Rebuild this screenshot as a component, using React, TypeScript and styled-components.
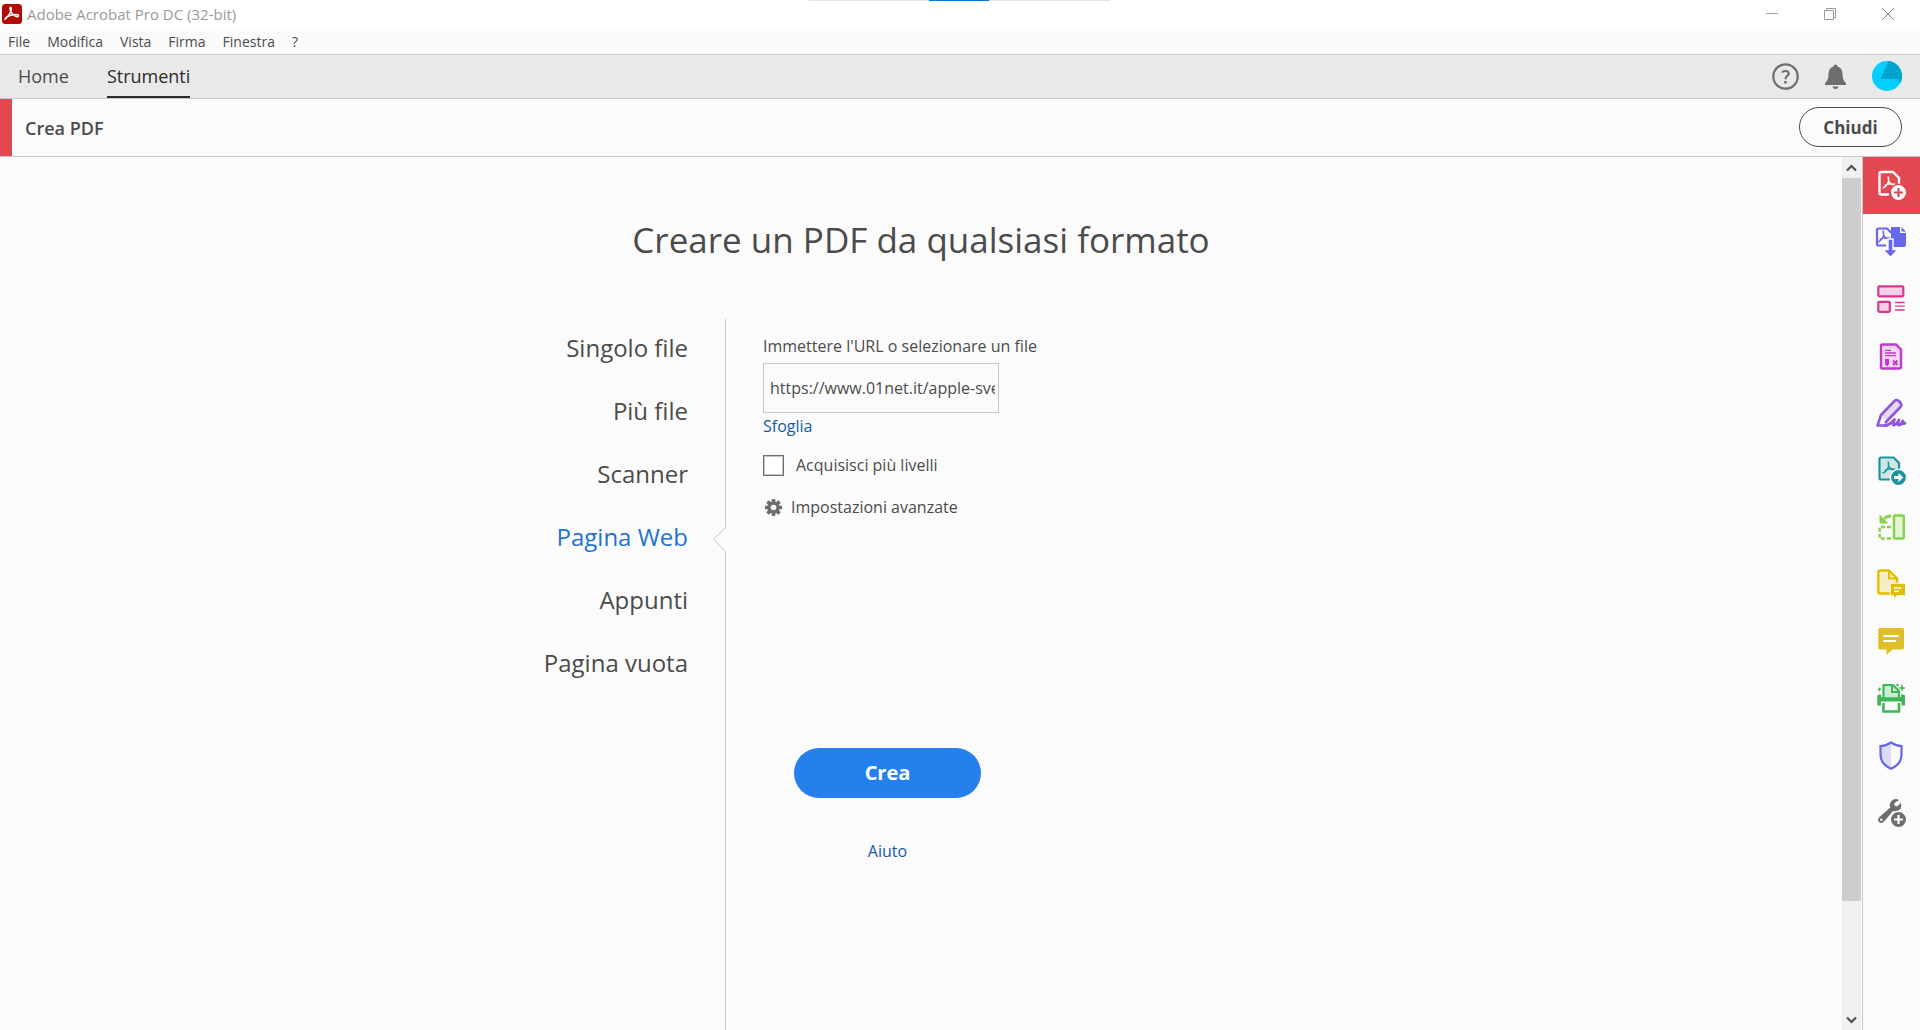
import React, { useState } from 'react';
import styled, { createGlobalStyle } from 'styled-components';

const GlobalStyle = createGlobalStyle`
  *, *::before, *::after { box-sizing: border-box; }
  body {
    margin: 0;
    background: #fbfbfb;
    color: #4b4b4b;
    font-family: "Open Sans", "Noto Sans", sans-serif;
    font-size: 16px;
  }
  button, input { font: inherit; color: inherit; }
  button { padding: 0; border: 0; background: none; cursor: pointer; }
  svg { display: block; }
`;

const Window = styled.div`
  display: flex;
  flex-direction: column;
  height: 100vh;
  overflow: hidden;
`;

const TitleBar = styled.header`
  position: relative;
  display: flex;
  align-items: center;
  height: 29px;
  flex: none;
  padding: 0 0 2px 2px;
  gap: 5px;
  background: #fff;
  color: #999;
  font-size: 15px;
`;

const AppTitle = styled.span`
  flex: 1;
`;

const LoadTrack = styled.div`
  position: absolute;
  top: 0;
  left: 50%;
  width: 301px;
  height: 1px;
  margin-left: -151px;
  background: linear-gradient(to right, #e5e5e5 120px, #0078d7 120px 180px, #e5e5e5 180px);
`;

const WindowButton = styled.button`
  display: grid;
  place-items: center;
  width: 58px;
  height: 27px;
  &:last-child { margin-right: 3px; }
`;

const WindowButtons = styled.div`
  display: flex;
`;

const MenuBar = styled.nav`
  display: flex;
  gap: 17px;
  height: 26px;
  flex: none;
  padding: 0 8px;
  background: #fafafa;
  border-bottom: 1px solid #c8c8c8;
`;

const MenuButton = styled.button`
  font-size: 14px;
  line-height: 24px;
`;

const TabBar = styled.div`
  display: flex;
  align-items: stretch;
  gap: 38px;
  height: 44px;
  flex: none;
  padding: 0 18px;
  background: #e9e9e9;
  border-bottom: 1px solid #c8c8c8;
`;

const Tab = styled.button<{ $active?: boolean }>`
  border-bottom: 2px solid ${p => (p.$active ? '#2c2c2c' : 'transparent')};
  color: ${p => (p.$active ? '#2c2c2c' : '#4b4b4b')};
  font-size: 18px;
  line-height: 38px;
`;

const Account = styled.div`
  display: flex;
  align-items: center;
  gap: 23px;
  margin-left: auto;
  padding-bottom: 1px;
`;

const ToolBar = styled.div`
  display: flex;
  align-items: center;
  justify-content: space-between;
  height: 58px;
  flex: none;
  padding: 0 18px 1px 25px;
  background: linear-gradient(to right, #e34850 12px, transparent 12px);
  border-bottom: 1px solid #c8c8c8;
`;

const ToolTitle = styled.h2`
  margin: 0;
  padding-top: 2px;
  font-size: 18px;
  font-weight: 600;
`;

const CloseButton = styled.button`
  width: 103px;
  height: 40px;
  border: 1px solid #4b4b4b;
  border-radius: 20px;
  font-size: 17px;
  font-weight: 700;
`;

const Body = styled.div`
  display: flex;
  flex: 1;
  min-height: 0;
`;

const Workspace = styled.main`
  display: flex;
  flex-direction: column;
  align-items: center;
  flex: 1;
  padding-top: 59px;
`;

const Heading = styled.h1`
  margin: 0 0 55px;
  font-size: 35px;
  font-weight: 400;
  line-height: 48px;
`;

const Columns = styled.div`
  display: grid;
  grid-template-columns: 224px 1fr;
  width: 840px;
  max-width: 100%;
  flex: 1;
`;

const SourceList = styled.nav`
  display: flex;
  flex-direction: column;
  align-items: flex-end;
  gap: 33px;
  padding: 14px 37px 0 0;
`;

const Source = styled.button<{ $active?: boolean }>`
  position: relative;
  color: ${p => (p.$active ? '#1f72cf' : '#4b4b4b')};
  font-size: 24px;
  line-height: 30px;
  white-space: nowrap;
`;

const Notch = styled.svg`
  position: absolute;
  top: 5px;
  right: -38px;
`;

const Panel = styled.form`
  display: flex;
  flex-direction: column;
  align-items: flex-start;
  padding: 15px 0 0 37px;
  border-left: 1px solid #c8c8c8;
  line-height: 24px;
`;

const UrlInput = styled.input`
  width: 236px;
  height: 50px;
  margin: 5px 0 1px;
  padding: 0 3px 0 6px;
  border: 1px solid #c8c8c8;
  border-radius: 0;
  background: #fbfbfb;
  outline: none;
`;

const Link = styled.a`
  color: #1459a8;
  text-decoration: none;
`;

const CheckRow = styled.label`
  display: flex;
  align-items: center;
  gap: 12px;
  margin-top: 15px;
`;

const CheckBox = styled.input`
  appearance: none;
  width: 21px;
  height: 21px;
  margin: 0;
  border: 1px solid #6e6e6e;
  box-shadow: inset 0 0 0 1px #c4c4c4;
  background: #fff;
  &:checked { background: #6e6e6e; }
`;

const AdvancedButton = styled.button`
  display: flex;
  align-items: center;
  gap: 8px;
  margin: 18px 0 0 1px;
`;

const Actions = styled.div`
  display: flex;
  flex-direction: column;
  align-items: center;
  gap: 41px;
  width: 249px;
  margin-top: 229px;
`;

const CreateButton = styled.button`
  width: 187px;
  height: 50px;
  border-radius: 25px;
  background: #2680eb;
  color: #fff;
  font-size: 20px;
  font-weight: 700;
`;

const ScrollBar = styled.div`
  display: flex;
  flex-direction: column;
  align-items: center;
  justify-content: space-between;
  width: 20px;
  flex: none;
  background: #f0f0f0;
  border-right: 1px solid #fbfbfb;
`;

const ScrollButton = styled.button`
  display: grid;
  place-items: center;
  width: 100%;
  height: 21px;
`;

const ScrollTrack = styled.div`
  flex: 1;
  width: 100%;
`;

const ScrollThumb = styled.div`
  height: 87%;
  background: #cdcdcd;
`;

const Rail = styled.aside`
  display: flex;
  flex-direction: column;
  flex: none;
  border-left: 1px solid #c8c8c8;
`;

const RailButton = styled.button<{ $active?: boolean }>`
  width: 57px;
  height: 57px;
  background: ${p => (p.$active ? '#e34850' : 'transparent')};
`;

const PdfMark = ({ color, x, y }: { color: string; x: number; y: number }) => (
  <path
    transform={`translate(${x} ${y})`}
    d="M-.8 -6Q.3 -2 -1.500 .8Q-3.200 3.800 -6 5M-.3 -2Q1.500 1.600 5 2.600M-3.800 2.200Q1 .2 6 1.200"
    fill="none"
    stroke={color}
    strokeWidth="1.4"
    strokeLinecap="round"
  />
);

const Glyph = ({ children }: { children: React.ReactNode }) => (
  <svg width="57" height="57" viewBox="0 0 57 57" fill="none" aria-hidden="true">
    {children}
  </svg>
);

const railTools = [
  {
    name: 'Crea PDF',
    icon: (
      <Glyph>
        <path d="M26 37.500H18.500A2 2 0 0 1 16.500 35.500V17A2 2 0 0 1 18.500 15H30L36 21V27" stroke="#fff" strokeWidth="2.400" />
        <PdfMark color="#fff" x={26} y={26} />
        <circle cx="35.500" cy="35.500" r="8.200" fill="#fff" stroke="#e34850" strokeWidth="1.400" />
        <path d="M35.500 31V40M31 35.500H40" stroke="#e34850" strokeWidth="2.200" />
      </Glyph>
    ),
  },
  {
    name: 'Combina file',
    icon: (
      <Glyph>
        <path d="M28 13H37V19H43V31Q43 33 41 33H28Z" fill="#6767ec" />
        <path d="M38.500 13L43 17.500H38.500Z" fill="#6767ec" />
        <path d="M23 31.500H15.500Q14 31.500 14 30V16Q14 14.500 15.500 14.500H24L28.500 19" stroke="#6767ec" strokeWidth="2.200" />
        <PdfMark color="#6767ec" x={21} y={23} />
        <path d="M25 25H30V35.500H35L27.500 43.500L20 35.500H25Z" fill="#6767ec" stroke="#fbfbfb" strokeWidth="1.400" />
      </Glyph>
    ),
  },
  {
    name: 'Organizza pagine',
    icon: (
      <Glyph>
        <g fill="#f7cfe4" stroke="#d83790" strokeWidth="2.200">
          <rect x="15.300" y="15.300" width="25" height="10" rx="1" />
          <rect x="15.300" y="30.800" width="11.500" height="10" rx="1" />
        </g>
        <path d="M32 31.500H41.700M32 35.200H41.700M32 39H41.700" stroke="#d83790" strokeWidth="1.300" />
      </Glyph>
    ),
  },
  {
    name: 'Prepara modulo',
    icon: (
      <Glyph>
        <path d="M18 18Q18 16.500 19.500 16.500H33L38 21.500V39Q38 40.500 36.500 40.500H19.500Q18 40.500 18 39Z" fill="#f3d6f3" stroke="#c038cc" strokeWidth="2.400" />
        <path d="M22 22.300H28M22 25H33M22 27.700H33" stroke="#c038cc" strokeWidth="1.300" />
        <path d="M22 31H26V36L24 38.500L22 36Z" fill="#c038cc" />
        <path d="M30 32.500L34.500 37M34.500 32.500L30 37" stroke="#c038cc" strokeWidth="2" />
      </Glyph>
    ),
  },
  {
    name: 'Modifica PDF',
    icon: (
      <Glyph>
        <path d="M14.500 40.500L18 30L31.500 16Q33.500 14 36.500 16.500Q39.500 19.500 37.500 22L24 36L20 40.500Z" fill="#e5daf5" />
        <path d="M18 30L27 40L14.500 40.500Z" fill="#fbfbfb" />
        <path d="M24 40.500H14.500L18 30L31.500 16Q33.500 14 36.500 16.500Q39.500 19.500 37.500 22L22 38" stroke="#9256d9" strokeWidth="2.600" strokeLinejoin="round" />
        <path d="M22 40.500Q27 40 31.500 34.500Q29 40 31 40Q33 40 36 35Q34 40 36 40Q38 40 40 36Q38.500 40.500 42 38" stroke="#9256d9" strokeWidth="2.800" strokeLinecap="round" strokeLinejoin="round" />
      </Glyph>
    ),
  },
  {
    name: 'Esporta PDF',
    icon: (
      <Glyph>
        <path d="M18 37.500Q16.500 37.500 16.500 36V17Q16.500 15.500 18 15.500H30.500L36 21V37.500Z" fill="#cfe6e7" stroke="#1b959a" strokeWidth="2.200" />
        <PdfMark color="#1b959a" x={26} y={26} />
        <circle cx="35.500" cy="35.500" r="8.200" fill="#1b959a" stroke="#fbfbfb" strokeWidth="1.600" />
        <path d="M31 34H35.500V31L40.300 35.500L35.500 40V37H31Z" fill="#fff" />
      </Glyph>
    ),
  },
  {
    name: 'Ruota pagine',
    icon: (
      <Glyph>
        <rect x="31" y="16.500" width="9.800" height="23" rx="1" fill="#e4f4d6" stroke="#87d24a" strokeWidth="2.400" />
        <path d="M28 28H16.700V39.500H28" stroke="#87d24a" strokeWidth="2.400" strokeDasharray="4 2" />
        <path d="M28 17Q23 17 21.500 20" stroke="#87d24a" strokeWidth="2.800" />
        <path d="M16.500 15.500V24.500H25.500Z" fill="#87d24a" />
      </Glyph>
    ),
  },
  {
    name: 'Invia per commenti',
    icon: (
      <Glyph>
        <path d="M17 37.500Q15.300 37.500 15.300 36V16Q15.300 14.500 17 14.500H26L34 22.500V37.500Z" fill="#f4edc7" stroke="#dfbf03" strokeWidth="2.400" />
        <path d="M26 14.500V22.500H34" stroke="#dfbf03" strokeWidth="2.200" />
        <path d="M28.500 27.200H41.500Q42.500 27.200 42.500 28.500V38.500Q42.500 39.700 41.500 39.700H34L30.500 43V39.700H28.500Q27.200 39.700 27.200 38.500V28.500Q27.200 27.200 28.500 27.200Z" fill="#dfbf03" stroke="#fbfbfb" />
        <path d="M31 32H38.500M31 35.300H36" stroke="#fbfbfb" strokeWidth="1.600" />
      </Glyph>
    ),
  },
  {
    name: 'Commento',
    icon: (
      <Glyph>
        <path d="M17 15H39Q41 15 41 17V34.500Q41 36.500 39 36.500H29.500L23.500 42V36.500H17Q15.300 36.500 15.300 34.500V17Q15.300 15 17 15Z" fill="#dfbf29" />
        <path d="M20.300 23H35.700M20.300 28H33" stroke="#fff" strokeWidth="2" />
      </Glyph>
    ),
  },
  {
    name: 'Scansione e OCR',
    icon: (
      <Glyph>
        <path d="M20.500 28V15H30L36 21V28" fill="#cdebd3" stroke="#3fb557" strokeWidth="2.200" />
        <path d="M29 15V22H36" stroke="#3fb557" strokeWidth="2" />
        <path d="M14.300 26Q14.300 24.500 16 24.500H18V27.300H38V24.500H40.500Q42 24.500 42 26V35.500H38.500V31.500H18V35.500H14.300Z" fill="#3fb557" />
        <path d="M20.500 33V41.500H36V33" stroke="#3fb557" strokeWidth="2.600" />
        <path d="M39 13.500L40 17L43 18L40 19L39 22L38 19L35 18L38 17ZM16.500 17L17.200 18.600L19 19.300L17.200 20L16.500 22L15.800 20L14 19.300L15.800 18.600ZM34.500 13L35.200 14.500L36.500 15L35.200 15.700L34.500 17L33.800 15.700L32.500 15L33.800 14.500Z" fill="#3fb557" />
      </Glyph>
    ),
  },
  {
    name: 'Proteggi',
    icon: (
      <Glyph>
        <path d="M28 15.500V41.500Q17.500 37.500 17.500 27V19Q23 19 28 15.500Z" fill="#dcdcf8" />
        <path d="M28 15.500Q33 19 38.500 19V27Q38.500 37.500 28 41.700Q17.500 37.500 17.500 27V19Q23 19 28 15.500Z" stroke="#6767ec" strokeWidth="2.200" />
      </Glyph>
    ),
  },
  {
    name: 'Altri strumenti',
    icon: (
      <Glyph>
        <path d="M36 16Q32 13.500 28.500 17Q26 20 27.200 23.500L16 33.500Q14 36 16 38Q18.500 40 21 37.500L30 27Q34.500 28.500 37.500 25Q39 22.500 37.800 19L34 22.500L31.500 21.500L31.300 19.300Z" fill="#6e6e6e" />
        <circle cx="18.300" cy="35.700" r="1.200" fill="#fbfbfb" />
        <circle cx="35.500" cy="35.500" r="8.200" fill="#6e6e6e" stroke="#fbfbfb" strokeWidth="1.400" />
        <path d="M35.500 31V40M31 35.500H40" stroke="#fff" strokeWidth="2.200" />
      </Glyph>
    ),
  },
];

const sources = ['Singolo file', 'Più file', 'Scanner', 'Pagina Web', 'Appunti', 'Pagina vuota'];
const menus = ['File', 'Modifica', 'Vista', 'Firma', 'Finestra', '?'];

const GearIcon = () => (
  <svg width="19" height="19" viewBox="-9.500 -9.500 19 19" aria-hidden="true">
    {[0, 45, 90, 135].map(a => (
      <rect key={a} x="-1.800" y="-8.600" width="3.600" height="17.200" rx="1" fill="#6e6e6e" transform={`rotate(${a})`} />
    ))}
    <circle r="6.200" fill="#6e6e6e" />
    <circle r="2.800" fill="#fbfbfb" />
  </svg>
);

export default function App() {
  const [source, setSource] = useState('Pagina Web');
  const [url, setUrl] = useState('https://www.01net.it/apple-svela');

  return (
    <Window>
      <GlobalStyle />
      <TitleBar>
        <svg width="20" height="20" viewBox="0 0 20 20" aria-hidden="true">
          <rect width="20" height="20" rx="3.500" fill="#b30b00" />
          <path d="M3.500 15C6 12 9 9 9.300 5.500C9.500 3 8 2.500 8 4.500C8 7.500 11.500 11.800 14 12.500C16.500 13.200 17.500 11.300 15.500 10.800C12.500 10.300 8 11.300 5 13C3 14.200 2.500 15.800 3.500 15Z" fill="none" stroke="#fff" strokeWidth="1.500" />
        </svg>
        <AppTitle>Adobe Acrobat Pro DC (32-bit)</AppTitle>
        <LoadTrack />
        <WindowButtons>
          <WindowButton aria-label="Riduci a icona">
            <svg width="12" height="12" viewBox="0 0 12 12"><path d="M0 5.500H12" stroke="#999" /></svg>
          </WindowButton>
          <WindowButton aria-label="Ripristina">
            <svg width="12" height="12" viewBox="0 0 12 12" fill="none" stroke="#999"><path d="M.5 2.500H9.500V11.500H.5ZM2.500 2.500V.5H11.500V9.500H9.500" /></svg>
          </WindowButton>
          <WindowButton aria-label="Chiudi finestra">
            <svg width="12" height="12" viewBox="0 0 12 12"><path d="M0 0L12 12M12 0L0 12" stroke="#888" /></svg>
          </WindowButton>
        </WindowButtons>
      </TitleBar>
      <MenuBar>
        {menus.map(m => <MenuButton key={m}>{m}</MenuButton>)}
      </MenuBar>
      <TabBar>
        <Tab>Home</Tab>
        <Tab $active>Strumenti</Tab>
        <Account>
          <button aria-label="Guida">
            <svg width="27" height="27" viewBox="0 0 27 27" fill="none" stroke="#6e6e6e">
              <circle cx="13.500" cy="13.500" r="12.200" strokeWidth="2.200" />
              <path d="M10 9.500Q11 8 13.500 8Q16.700 8 16.700 10.500Q16.700 12 15 13.200Q13.500 14.200 13.500 16.200" strokeWidth="2.200" />
              <path d="M13.500 18V20.500" strokeWidth="2.600" />
            </svg>
          </button>
          <button aria-label="Notifiche">
            <svg width="27" height="27" viewBox="0 0 27 27" fill="#6e6e6e">
              <path d="M13.500 1.500Q15.500 1.500 15.500 3.500Q20.500 5 20.500 11Q20.500 17.500 24 20V22H3V20Q6.500 17.500 6.500 11Q6.500 5 11.500 3.500Q11.500 1.500 13.500 1.500ZM10.500 23.500H16.500Q16 26 13.500 26Q11 26 10.500 23.500Z" />
            </svg>
          </button>
          <button aria-label="Profilo">
            <svg width="30" height="30" viewBox="0 0 30 30">
              <circle cx="15" cy="15" r="15" fill="#00cfff" />
              <path d="M16.500 .1A15 15 0 0 1 28.300 22L26 18H8.500Z" fill="#00a3cb" />
            </svg>
          </button>
        </Account>
      </TabBar>
      <ToolBar>
        <ToolTitle>Crea PDF</ToolTitle>
        <CloseButton>Chiudi</CloseButton>
      </ToolBar>
      <Body>
        <Workspace>
          <Heading>Creare un PDF da qualsiasi formato</Heading>
          <Columns>
            <SourceList>
              {sources.map(s => (
                <Source key={s} $active={s === source} onClick={() => setSource(s)}>
                  {s}
                  {s === source && (
                    <Notch width="13" height="25" viewBox="0 0 13 25" aria-hidden="true">
                      <path d="M13 0H12.500L.5 12.500L12.500 25H13Z" fill="#fbfbfb" />
                      <path d="M12.500 .5L.5 12.500L12.500 24.500" fill="none" stroke="#c8c8c8" />
                    </Notch>
                  )}
                </Source>
              ))}
            </SourceList>
            <Panel onSubmit={e => e.preventDefault()}>
              <label htmlFor="url">Immettere l'URL o selezionare un file</label>
              <UrlInput id="url" value={url} onChange={e => setUrl(e.target.value)} />
              <Link href="#sfoglia">Sfoglia</Link>
              <CheckRow>
                <CheckBox type="checkbox" />
                Acquisisci più livelli
              </CheckRow>
              <AdvancedButton type="button">
                <GearIcon />
                Impostazioni avanzate
              </AdvancedButton>
              <Actions>
                <CreateButton type="submit">Crea</CreateButton>
                <Link href="#aiuto">Aiuto</Link>
              </Actions>
            </Panel>
          </Columns>
        </Workspace>
        <ScrollBar>
          <ScrollButton aria-label="Scorri su">
            <svg width="11" height="8" viewBox="0 0 11 8"><path d="M1 6.500L5.500 2L10 6.500" fill="none" stroke="#505050" strokeWidth="2.200" /></svg>
          </ScrollButton>
          <ScrollTrack><ScrollThumb /></ScrollTrack>
          <ScrollButton aria-label="Scorri giù">
            <svg width="11" height="8" viewBox="0 0 11 8"><path d="M1 1.500L5.500 6L10 1.500" fill="none" stroke="#505050" strokeWidth="2.200" /></svg>
          </ScrollButton>
        </ScrollBar>
        <Rail>
          {railTools.map((t, i) => (
            <RailButton key={t.name} $active={i === 0} aria-label={t.name}>{t.icon}</RailButton>
          ))}
        </Rail>
      </Body>
    </Window>
  );
}
